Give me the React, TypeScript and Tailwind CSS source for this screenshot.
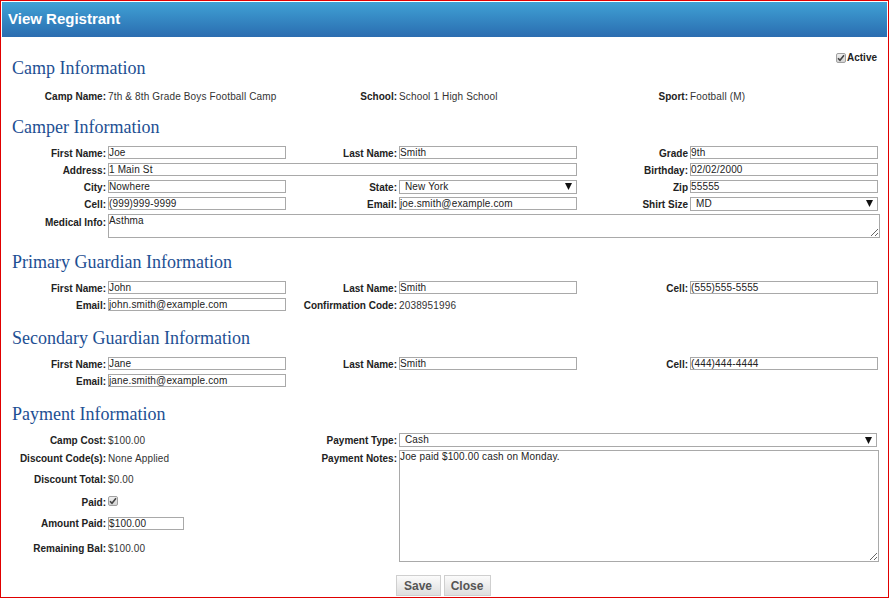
import React from "react";

const FONT = { fontFamily: '"Liberation Sans", Arial, sans-serif' };

const L = ({ children }: { children?: React.ReactNode }) => (
  <div className="translate-y-px whitespace-nowrap pr-[2px] text-right text-[10px] font-bold leading-[12px] text-[#222]">
    {children}
  </div>
);

const V = ({ children }: { children?: React.ReactNode }) => (
  <div className="translate-y-px whitespace-nowrap text-[10px] leading-[12px] tracking-[0.15px] text-[#333]">{children}</div>
);

const Inp = ({ value, w = "w-[178px]" }: { value: string; w?: string }) => (
  <input
    readOnly
    value={value}
    className={`block h-[13px] ${w} border border-[#a9a9a9] bg-white px-0 text-[10px] leading-[11px] tracking-[0.15px] text-[#222] outline-none`}
  />
);

const Arrow = () => (
  <svg width="7" height="7" viewBox="0 0 7 7">
    <polygon points="0,0 7,0 3.5,7" fill="#111" />
  </svg>
);

const Sel = ({ value, w = "w-[178px]" }: { value: string; w?: string }) => (
  <div
    className={`flex h-[14px] ${w} items-center justify-between border border-[#a9a9a9] bg-white pl-[5px] pr-[4px] text-[10px] leading-[12px] tracking-[0.15px] text-[#222]`}
  >
    <span>{value}</span>
    <Arrow />
  </div>
);

const Check = () => (
  <span className="inline-flex h-[10px] w-[10px] items-center justify-center rounded-[2px] border border-[#a0a0a0] bg-gradient-to-b from-[#eeeeee] to-[#d4d4d4]">
    <svg width="8" height="8" viewBox="0 0 8 8">
      <path d="M1 4.2 L3 6.3 L7 1.3" stroke="#444" strokeWidth="1.6" fill="none" />
    </svg>
  </span>
);

const Heading = ({ children, className = "" }: { children: React.ReactNode; className?: string }) => (
  <div
    className={`h-[22px] pl-[10px] text-[18px] leading-[22px] text-[#1d4f93] ${className}`}
    style={{ fontFamily: '"Liberation Serif", "Times New Roman", serif' }}
  >
    {children}
  </div>
);

const GRID = "grid grid-cols-[106px_179px_112px_179px_112px_189px] items-center";

export default function App() {
  return (
    <div className="h-[598px] w-[889px] overflow-hidden border border-[#e00000] bg-white p-px" style={FONT}>
      {/* Header */}
      <div className="flex h-[35px] items-center bg-gradient-to-b from-[#40a1d5] to-[#2b6db0] pl-[6px] text-[15px] font-bold text-white">
        View Registrant
      </div>

      {/* Camp Information */}
      <div className="flex items-start justify-between pr-[10px]">
        <Heading className="mt-[20px]">Camp Information</Heading>
        <div className="mt-[15px] flex items-center gap-[1px]">
          <Check />
          <span className="text-[10px] font-bold leading-[12px] text-[#222]">Active</span>
        </div>
      </div>
      <div className={`${GRID} mt-[8px] h-[17px]`}>
        <L>Camp Name:</L>
        <V>7th &amp; 8th Grade Boys Football Camp</V>
        <L>School:</L>
        <V>School 1 High School</V>
        <L>Sport:</L>
        <V>Football (M)</V>
      </div>

      {/* Camper Information */}
      <Heading className="mt-[12px]">Camper Information</Heading>
      <div className="mt-[6px]">
        <div className={`${GRID} h-[17px]`}>
          <L>First Name:</L>
          <Inp value="Joe" />
          <L>Last Name:</L>
          <Inp value="Smith" />
          <L>Grade</L>
          <Inp value="9th" w="w-[188px]" />
        </div>
        <div className={`${GRID} h-[17px]`}>
          <L>Address:</L>
          <div className="col-span-3">
            <Inp value="1 Main St" w="w-[469px]" />
          </div>
          <L>Birthday:</L>
          <Inp value="02/02/2000" w="w-[188px]" />
        </div>
        <div className={`${GRID} h-[17px]`}>
          <L>City:</L>
          <Inp value="Nowhere" />
          <L>State:</L>
          <Sel value="New York" />
          <L>Zip</L>
          <Inp value="55555" w="w-[188px]" />
        </div>
        <div className={`${GRID} h-[17px]`}>
          <L>Cell:</L>
          <Inp value="(999)999-9999" />
          <L>Email:</L>
          <Inp value="joe.smith@example.com" />
          <L>Shirt Size</L>
          <Sel value="MD" w="w-[188px]" />
        </div>
        <div className={`${GRID} h-[26px] !items-start pt-[2px]`}>
          <div className="pt-[2px]">
            <L>Medical Info:</L>
          </div>
          <div className="col-span-5">
            <textarea
              readOnly
              value="Asthma"
              className="block h-[24px] w-[772px] border border-[#a9a9a9] bg-white px-0 text-[10px] leading-[12px] tracking-[0.15px] text-[#222] outline-none"
            />
          </div>
        </div>
      </div>

      {/* Primary Guardian */}
      <Heading className="mt-[13px]">Primary Guardian Information</Heading>
      <div className="mt-[6px]">
        <div className={`${GRID} h-[17px]`}>
          <L>First Name:</L>
          <Inp value="John" />
          <L>Last Name:</L>
          <Inp value="Smith" />
          <L>Cell:</L>
          <Inp value="(555)555-5555" w="w-[188px]" />
        </div>
        <div className={`${GRID} h-[17px]`}>
          <L>Email:</L>
          <Inp value="john.smith@example.com" />
          <L>Confirmation Code:</L>
          <V>2038951996</V>
          <div />
          <div />
        </div>
      </div>

      {/* Secondary Guardian */}
      <Heading className="mt-[14px]">Secondary Guardian Information</Heading>
      <div className="mt-[6px]">
        <div className={`${GRID} h-[17px]`}>
          <L>First Name:</L>
          <Inp value="Jane" />
          <L>Last Name:</L>
          <Inp value="Smith" />
          <L>Cell:</L>
          <Inp value="(444)444-4444" w="w-[188px]" />
        </div>
        <div className={`${GRID} h-[17px]`}>
          <L>Email:</L>
          <Inp value="jane.smith@example.com" />
          <div />
          <div />
          <div />
          <div />
        </div>
      </div>

      {/* Payment Information */}
      <Heading className="mt-[14px]">Payment Information</Heading>
      <div className="mt-[6px] grid grid-cols-[285px_1fr]">
        <div className="flex flex-col">
          <div className="grid h-[18px] grid-cols-[106px_1fr] items-center">
            <L>Camp Cost:</L>
            <V>$100.00</V>
          </div>
          <div className="grid h-[18px] grid-cols-[106px_1fr] items-center">
            <L>Discount Code(s):</L>
            <V>None Applied</V>
          </div>
          <div className="grid h-[24px] grid-cols-[106px_1fr] items-center">
            <L>Discount Total:</L>
            <V>$0.00</V>
          </div>
          <div className="grid h-[20px] grid-cols-[106px_1fr] items-center">
            <div className="pt-[2px]">
              <L>Paid:</L>
            </div>
            <div className="flex">
              <Check />
            </div>
          </div>
          <div className="grid h-[24px] grid-cols-[106px_1fr] items-center">
            <L>Amount Paid:</L>
            <Inp value="$100.00" w="w-[76px]" />
          </div>
          <div className="grid h-[26px] grid-cols-[106px_1fr] items-center">
            <L>Remaining Bal:</L>
            <V>$100.00</V>
          </div>
        </div>
        <div className="flex flex-col">
          <div className="grid h-[18px] grid-cols-[112px_1fr] items-center">
            <L>Payment Type:</L>
            <Sel value="Cash" w="w-[478px]" />
          </div>
          <div className="grid grid-cols-[112px_1fr] items-start">
            <div className="pt-[3px]">
              <L>Payment Notes:</L>
            </div>
            <textarea
              readOnly
              value="Joe paid $100.00 cash on Monday."
              className="mt-px block h-[112px] w-[480px] border border-[#a9a9a9] bg-white px-0 text-[10px] leading-[12px] tracking-[0.15px] text-[#222] outline-none"
            />
          </div>
        </div>
      </div>

      {/* Buttons */}
      <div className="mt-[13px] flex justify-center gap-[3px] pr-[3px]">
        <button className="h-[21px] w-[45px] border border-[#cfcfcf] bg-gradient-to-b from-[#fbfbfb] to-[#dedede] text-[12px] font-bold text-[#555]">
          Save
        </button>
        <button className="h-[21px] w-[47px] border border-[#cfcfcf] bg-gradient-to-b from-[#fbfbfb] to-[#dedede] text-[12px] font-bold text-[#555]">
          Close
        </button>
      </div>
    </div>
  );
}
